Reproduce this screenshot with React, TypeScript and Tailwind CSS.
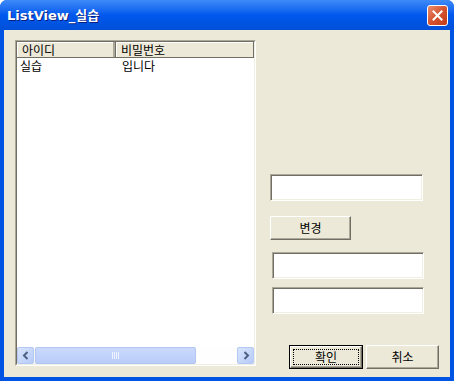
import React from 'react';

const ko = { fontFamily: '"Noto Sans CJK KR", "Liberation Sans", sans-serif' };

function TextBox({ className = '' }: { className?: string }) {
  return (
    <div
      className={`h-[27px] bg-white border-t border-l border-b border-r border-t-[#aca899] border-l-[#aca899] border-b-white border-r-white shadow-[inset_1px_1px_0_#716f64,inset_-1px_-1px_0_#f1efe2] ${className}`}
    />
  );
}

function Button({ label, def = false, className = '' }: { label: string; def?: boolean; className?: string }) {
  if (def) {
    return (
      <div className={`h-[24px] border border-black bg-[#ece9d8] ${className}`}>
        <div className="h-full w-full border-t border-l border-b border-r border-t-white border-l-white border-b-[#716f64] border-r-[#716f64] shadow-[inset_-1px_-1px_0_#aca899] p-[2px]">
          <div className="h-full w-full border border-dotted border-black flex items-center justify-center text-[12px] leading-none text-black" style={ko}>
            {label}
          </div>
        </div>
      </div>
    );
  }
  return (
    <div
      className={`h-[24px] bg-[#ece9d8] border-t border-l border-b border-r border-t-white border-l-white border-b-[#716f64] border-r-[#716f64] shadow-[inset_-1px_-1px_0_#aca899] flex items-center justify-center text-[12px] leading-none text-black ${className}`}
      style={ko}
    >
      {label}
    </div>
  );
}

function ScrollArrow({ dir }: { dir: 'left' | 'right' }) {
  return (
    <div className="w-[17px] h-[17px] rounded-[2px] bg-gradient-to-br from-[#d9e5fd] to-[#b6cbf7] border border-[#b4c8f6] flex items-center justify-center">
      <svg width="8" height="9" viewBox="0 0 8 9">
        {dir === 'left' ? (
          <path d="M5.5 1 L2 4.5 L5.5 8" fill="none" stroke="#4d6185" strokeWidth="2" />
        ) : (
          <path d="M2.5 1 L6 4.5 L2.5 8" fill="none" stroke="#4d6185" strokeWidth="2" />
        )}
      </svg>
    </div>
  );
}

function ListView() {
  return (
    <div className="mt-[10px] ml-[11px] w-[241px] h-[326px] border border-t-[#aca899] border-l-[#aca899] border-b-white border-r-white">
      <div className="h-full w-full border border-t-[#716f64] border-l-[#716f64] border-b-[#f1efe2] border-r-[#f1efe2] bg-white flex flex-col">
        <div className="h-[16px] flex bg-[#ece9d8] border-b border-[#716f64] text-[12px] leading-[15px] text-black" style={ko}>
          <div className="w-[99px] pl-[5px] border-r border-r-[#716f64] shadow-[inset_-2px_0_0_#aca899,inset_1px_1px_0_white]">아이디</div>
          <div className="flex-1 pl-[5px] shadow-[inset_1px_1px_0_white] border-r border-r-[#716f64]">비밀번호</div>
        </div>
        <div className="flex text-[12px] leading-[14px] text-black pt-[1px]" style={ko}>
          <div className="w-[99px] pl-[3px]">실습</div>
          <div className="flex-1 pl-[6px]">입니다</div>
        </div>
        <div className="flex-1" />
        <div className="h-[17px] flex items-center bg-[#f7f6f1]">
          <ScrollArrow dir="left" />
          <div className="flex-1 h-full flex">
            <div className="w-[161px] h-full ml-[1px] rounded-[2px] bg-gradient-to-b from-[#cad9fd] to-[#b9cdf8] border border-[#b2c6f3] flex items-center justify-center">
              <div className="flex gap-[1px]">
                <div className="w-[1px] h-[7px] bg-[#eef3fe]" />
                <div className="w-[1px] h-[7px] bg-[#eef3fe]" />
                <div className="w-[1px] h-[7px] bg-[#eef3fe]" />
                <div className="w-[1px] h-[7px] bg-[#eef3fe]" />
              </div>
            </div>
            <div className="flex-1 h-full bg-[#fefefe]" />
          </div>
          <ScrollArrow dir="right" />
        </div>
      </div>
    </div>
  );
}

export default function App() {
  return (
    <div className="w-[454px] h-[384px] bg-white overflow-hidden">
      <div className="w-[454px] h-[381px] flex flex-col bg-[#0054e3] rounded-t-[7px] overflow-hidden">
        <div className="h-[30px] shrink-0 flex items-center bg-gradient-to-b from-[#3d8af7] via-[#0058ee] to-[#0050d8] pl-[7px] pr-[6px]">
          <span
            className="text-white font-bold text-[13px] leading-none [text-shadow:1px_1px_0_#0a1f80]"
            style={{ fontFamily: '"DejaVu Sans", "Noto Sans CJK KR", sans-serif' }}
          >
            ListView_<span style={ko}>실습</span>
          </span>
          <div className="ml-auto w-[21px] h-[21px] rounded-[3px] border border-white bg-gradient-to-br from-[#e98c6c] via-[#d5532f] to-[#c13b18] flex items-center justify-center">
            <svg width="11" height="11" viewBox="0 0 11 11">
              <path d="M1.5 1.5 L9.5 9.5 M9.5 1.5 L1.5 9.5" stroke="white" strokeWidth="2" strokeLinecap="square" />
            </svg>
          </div>
        </div>
        <div className="flex-1 mx-[4px] mb-[4px] bg-[#ece9d8] flex">
          <ListView />
          <div className="ml-[14px] mt-[144px] flex flex-col">
            <TextBox className="w-[153px]" />
            <Button label="변경" className="w-[81px] mt-[15px]" />
            <TextBox className="w-[152px] mt-[12px] ml-[2px]" />
            <TextBox className="w-[152px] mt-[8px] ml-[2px]" />
            <div className="flex mt-[31px] ml-[19px] gap-[3px]">
              <Button label="확인" def className="w-[74px]" />
              <Button label="취소" className="w-[73px]" />
            </div>
          </div>
        </div>
      </div>
    </div>
  );
}
